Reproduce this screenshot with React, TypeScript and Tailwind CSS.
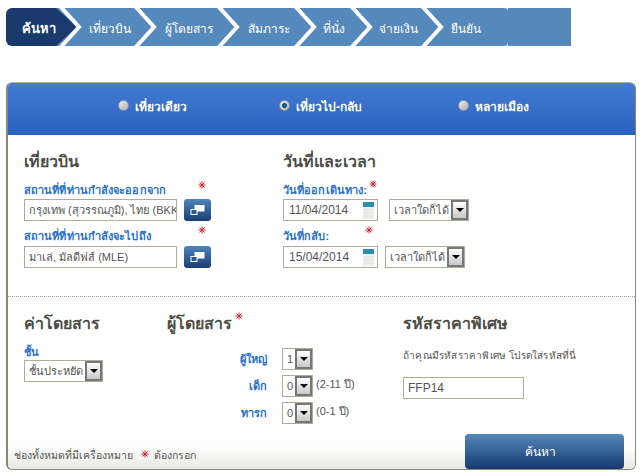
import React from "react";

const font = "font-['Liberation_Sans','Noto_Sans','DejaVu_Sans',sans-serif]";

const steps = [
  { label: "ค้นหา", w: "w-[76px]", pl: "pl-4", active: true },
  { label: "เที่ยวบิน", w: "w-[75px]", pl: "pl-[7px]" },
  { label: "ผู้โดยสาร", w: "w-[83px]", pl: "pl-2" },
  { label: "สัมภาระ", w: "w-[77px]", pl: "pl-2" },
  { label: "ที่นั่ง", w: "w-[56px]", pl: "pl-[6px]" },
  { label: "จ่ายเงิน", w: "w-[71px]", pl: "pl-[6px]" },
];

const Chevron = ({ active }: { active?: boolean }) => (
  <svg width="26" height="38" viewBox="0 0 26 38" className="absolute right-0 top-0">
    {active && <polygon points="0,0 26,0 26,38 0,38 21,19" fill="#5589bb" />}
    <polyline points="4,-2 23,19 4,40" fill="none" stroke="#ffffff" strokeWidth="4" />
  </svg>
);

const Star = ({ className = "" }: { className?: string }) => (
  <svg width="8" height="8" viewBox="0 0 9 9" className={className}>
    <path d="M4.5 0.5v8M0.5 4.5h8M1.7 1.7l5.6 5.6M7.3 1.7l-5.6 5.6" stroke="#e0101a" strokeWidth="1" />
  </svg>
);

const Radio = ({ checked, label }: { checked?: boolean; label: string }) => (
  <div className="flex items-center gap-[6px]">
    <span className="w-[11px] h-[11px] rounded-full border border-[#8f9aa8] bg-gradient-to-br from-[#e8e8e8] to-[#b4b4b4] flex items-center justify-center">
      {checked && <span className="w-[5px] h-[5px] rounded-full bg-[#0f6f9f] border border-[#0b3a55]" />}
    </span>
    <span className="text-[12px] font-bold text-white pt-[2px]">{label}</span>
  </div>
);

const Heading = ({ children }: { children: React.ReactNode }) => (
  <h3 className="text-[16px] leading-[20px] font-bold text-[#4d4d45]">{children}</h3>
);

const Label = ({ children }: { children: React.ReactNode }) => (
  <span className="block text-[11px] leading-[14px] font-bold tracking-[0.1px] text-[#2a70ca]">{children}</span>
);

const TextBox = ({ value, w, size = "text-[11px]" }: { value: string; w: string; size?: string }) => (
  <div className={`${w} ${size} h-[22px] border border-[#aeab98] bg-white pl-[4px] flex items-center overflow-hidden whitespace-nowrap text-[#555555]`}>
    {value}
  </div>
);

const SelectBox = ({ value, w }: { value: string; w: string }) => (
  <div className={`${w} h-[22px] border border-[#aeab98] bg-white pl-[4px] flex items-center justify-between whitespace-nowrap text-[11px] text-[#555555]`}>
    <span>{value}</span>
    <span className="w-[17px] h-[20px] border-2 border-[#777777] bg-gradient-to-b from-white to-[#c8c8c8] flex items-center justify-center shrink-0">
      <svg width="8" height="4" viewBox="0 0 8 4">
        <polygon points="0,0 8,0 4,4" fill="#000000" />
      </svg>
    </span>
  </div>
);

const LookupButton = () => (
  <button className="w-[27px] h-[22px] rounded-[3px] bg-gradient-to-b from-[#4f86bb] to-[#1a3f75] flex items-center justify-center">
    <svg width="16" height="12" viewBox="0 0 16 12">
      <rect x="4.5" y="1" width="10" height="6.5" fill="#ffffff" />
      <rect x="1" y="5.5" width="6" height="5" fill="#2a5a92" stroke="#ffffff" />
    </svg>
  </button>
);

const DateBox = ({ value }: { value: string }) => (
  <div className="w-[95px] h-[22px] border border-[#aeab98] bg-white pl-[5px] pr-[2px] flex items-center justify-between text-[12px] text-[#555555]">
    <span>{value}</span>
    <svg width="13" height="17" viewBox="0 0 13 17">
      <rect x="1" y="0" width="11" height="5" fill="#2a8fa8" />
      <rect x="1" y="5" width="11" height="12" fill="#eef0ee" />
      <path d="M1 8h11M1 11h11M1 14h11" stroke="#dfe2df" />
    </svg>
  </div>
);

const passengers = [
  { label: "ผู้ใหญ่", value: "1" },
  { label: "เด็ก", value: "0", note: "(2-11 ปี)" },
  { label: "ทารก", value: "0", note: "(0-1 ปี)" },
];

export default function App() {
  return (
    <div className={`${font} w-[643px] h-[473px] overflow-hidden bg-white`}>
      {/* Steps */}
      <div className="flex h-[38px] ml-[6px] mt-[8px] w-[565px]">
        {steps.map((s) => (
          <div
            key={s.label}
            className={`relative ${s.w} ${s.pl} pt-[4px] flex items-center ${
              s.active ? "bg-[#1a3a6e] rounded-l-[6px] font-bold text-[13px] text-white" : "bg-[#5589bb] text-[12px] text-white"
            }`}
          >
            {s.label}
            <Chevron active={s.active} />
          </div>
        ))}
        <div className="w-[64px] pl-[7px] pt-[4px] flex items-center text-[12px] text-white bg-[#5589bb] rounded-r-[4px]">ยืนยัน</div>
        <div className="flex-1 bg-[#5589bb]" />
      </div>

      {/* Panel */}
      <div className="relative mt-[36px] ml-[6px] w-[630px] h-[388px] border border-[#8a8672] border-t-[#b5b3a5] border-l-2 rounded-[6px] overflow-hidden">
        <div className="h-[52px] bg-gradient-to-b from-[#427ad2] to-[#2a62c0] flex items-center pb-[7px] pl-[110px]">
          <div className="w-[161px]"><Radio label="เที่ยวเดียว" /></div>
          <div className="w-[179px]"><Radio checked label="เที่ยวไป-กลับ" /></div>
          <Radio label="หลายเมือง" />
        </div>

        {/* Flight + dates */}
        <div className="flex pl-[16px] pt-[17px] h-[162px] border-b border-dotted border-[#999999]">
          <div className="w-[259px]">
            <Heading>เที่ยวบิน</Heading>
            <div className="flex mt-[11px] h-[14px]">
              <div className="w-[174px]"><Label>สถานที่ที่ท่านกำลังจะออกจาก</Label></div>
              <Star className="-mt-[2px]" />
            </div>
            <div className="flex gap-[7px] mt-[2px]">
              <TextBox w="w-[153px]" value="กรุงเทพ (สุวรรณภูมิ), ไทย (BKK)" />
              <LookupButton />
            </div>
            <div className="flex mt-[8px] h-[14px]">
              <div className="w-[174px]"><Label>สถานที่ที่ท่านกำลังจะไปถึง</Label></div>
              <Star className="-mt-[3px]" />
            </div>
            <div className="flex gap-[7px] mt-[3px]">
              <TextBox w="w-[153px]" value="มาเล่, มัลดีฟส์ (MLE)" />
              <LookupButton />
            </div>
          </div>
          <div>
            <Heading>วันที่และเวลา</Heading>
            <div className="flex mt-[11px] h-[14px]">
              <div className="w-[86px]"><Label>วันที่ออกเดินทาง:</Label></div>
              <Star className="-mt-[3px]" />
            </div>
            <div className="flex gap-[11px] mt-[2px]">
              <DateBox value="11/04/2014" />
              <SelectBox w="w-[80px]" value="เวลาใดก็ได้" />
            </div>
            <div className="flex mt-[8px] h-[14px]">
              <div className="w-[82px]"><Label>วันที่กลับ:</Label></div>
              <Star className="-mt-[3px]" />
            </div>
            <div className="flex gap-[7px] mt-[3px]">
              <DateBox value="15/04/2014" />
              <SelectBox w="w-[80px]" value="เวลาใดก็ได้" />
            </div>
          </div>
        </div>

        {/* Fare + passengers + promo */}
        <div className="flex pl-[16px] pt-[17px]">
          <div className="w-[143px]">
            <Heading>ค่าโดยสาร</Heading>
            <div className="mt-[11px]"><Label>ชั้น</Label></div>
            <div className="mt-[1px]"><SelectBox w="w-[79px]" value="ชั้นประหยัด" /></div>
          </div>
          <div className="w-[236px]">
            <div className="flex">
              <Heading>ผู้โดยสาร</Heading>
              <Star className="ml-[3px] -mt-[2px]" />
            </div>
            <div className="flex flex-col gap-[5px] mt-[14px]">
              {passengers.map((p) => (
                <div key={p.label} className="flex items-center h-[22px]">
                  <div className="w-[100px] text-right"><Label>{p.label}</Label></div>
                  <div className="ml-[15px]"><SelectBox w="w-[31px]" value={p.value} /></div>
                  {p.note && <span className="ml-[3px] -mt-[4px] text-[11px] text-[#555555]">{p.note}</span>}
                </div>
              ))}
            </div>
          </div>
          <div>
            <Heading>รหัสราคาพิเศษ</Heading>
            <p className="mt-[15px] text-[10px] leading-[14px] tracking-[0.2px] text-[#555555] whitespace-nowrap">ถ้าคุณมีรหัสราคาพิเศษ โปรดใส่รหัสที่นี่</p>
            <div className="mt-[14px]"><TextBox w="w-[121px]" size="text-[12px]" value="FFP14" /></div>
          </div>
        </div>

        {/* Footer */}
        <div className="absolute left-0 right-0 bottom-0 h-[24px] bg-gradient-to-b from-white to-[#e8e8e4] pl-[6px] pb-[2px] flex items-center gap-[8px] text-[10.5px] text-[#555555]">
          <span>ช่องทั้งหมดที่มีเครื่องหมาย</span>
          <Star className="-mt-[4px] -mr-[3px]" />
          <span>ต้องกรอก</span>
        </div>
        <button className="absolute right-[11px] bottom-0 w-[159px] h-[35px] rounded-[4px] pr-[8px] bg-gradient-to-b from-[#5589bb] to-[#173a70] text-[12px] text-white">
          ค้นหา
        </button>
      </div>
    </div>
  );
}
